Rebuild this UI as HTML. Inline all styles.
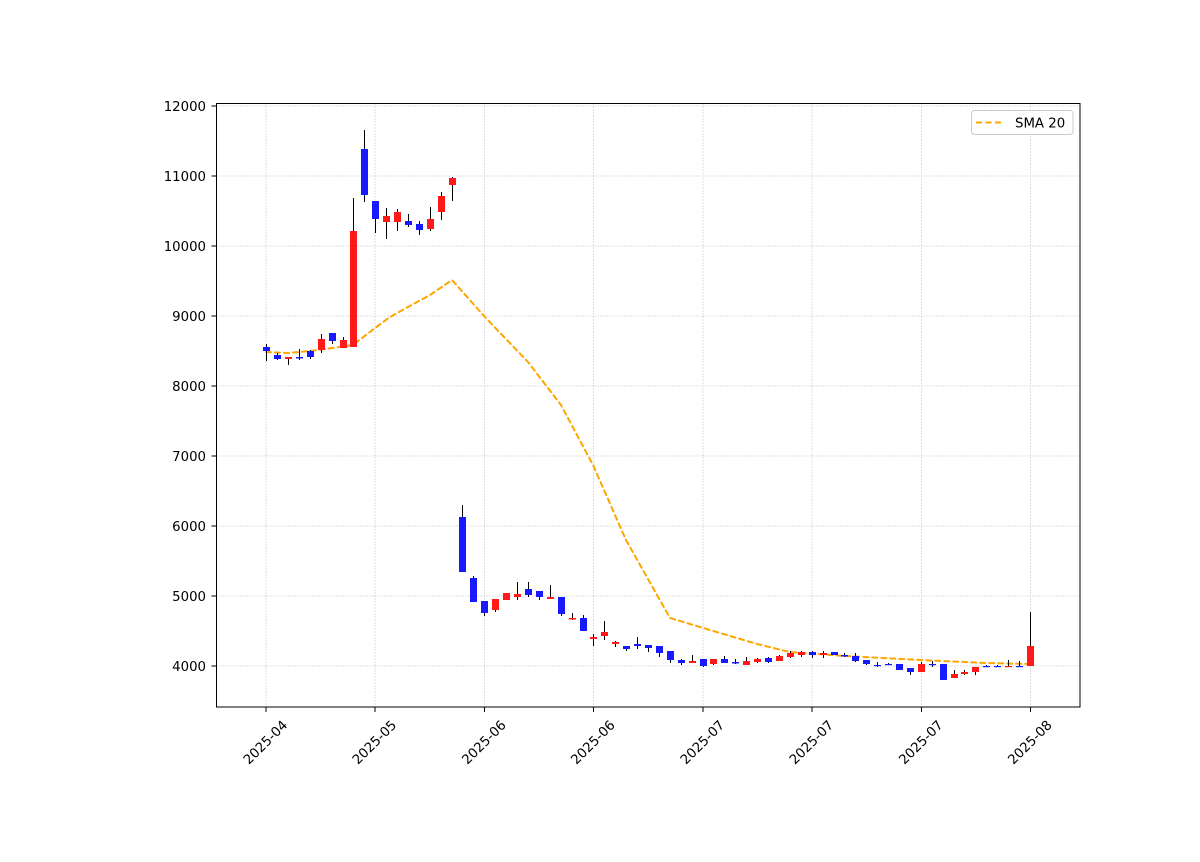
<!DOCTYPE html>
<html><head><meta charset="utf-8"><style>
html,body{margin:0;padding:0;background:#fff;}
svg{display:block;font-family:"DejaVu Sans","Liberation Sans",sans-serif;}
</style></head><body>
<svg width="1200" height="862" viewBox="0 0 1200 862" xmlns="http://www.w3.org/2000/svg">
<rect width="1200" height="862" fill="#fff"/>
<g stroke="#b0b0b0" stroke-width="0.8" stroke-dasharray="1,2">
<line x1="216.5" x2="1080" y1="106" y2="106"/><line x1="216.5" x2="1080" y1="176" y2="176"/><line x1="216.5" x2="1080" y1="246" y2="246"/><line x1="216.5" x2="1080" y1="316" y2="316"/><line x1="216.5" x2="1080" y1="386" y2="386"/><line x1="216.5" x2="1080" y1="456" y2="456"/><line x1="216.5" x2="1080" y1="526" y2="526"/><line x1="216.5" x2="1080" y1="596" y2="596"/><line x1="216.5" x2="1080" y1="666" y2="666"/>
<line y1="103.5" y2="707" x1="266" x2="266"/><line y1="103.5" y2="707" x1="375" x2="375"/><line y1="103.5" y2="707" x1="484.5" x2="484.5"/><line y1="103.5" y2="707" x1="593.5" x2="593.5"/><line y1="103.5" y2="707" x1="703" x2="703"/><line y1="103.5" y2="707" x1="812" x2="812"/><line y1="103.5" y2="707" x1="921.5" x2="921.5"/><line y1="103.5" y2="707" x1="1030.5" x2="1030.5"/>
</g>
<polyline fill="none" stroke="#ffa500" stroke-width="2" stroke-linecap="round" stroke-dasharray="5,4" points="266,352 288,353 310,351 332,348 353,345 375,328 390,317 408,307 430,295 452,280 484,316 528,362 561,405 593,465 626,540 670,618 720,633 757,644 790,652 845,656 921,660 986,663 1030,664"/>
<g transform="translate(0.5,0)">
<line x1="266" x2="266" y1="344" y2="361" stroke="#000"/><rect x="262.5" y="347" width="7" height="4" fill="#1919ff"/>
<line x1="277" x2="277" y1="353" y2="360" stroke="#000"/><rect x="273.5" y="355" width="7" height="4" fill="#1919ff"/>
<line x1="288" x2="288" y1="357" y2="365" stroke="#000"/><rect x="284.5" y="357" width="7" height="2" fill="#ff1919"/>
<line x1="299" x2="299" y1="349" y2="360" stroke="#000"/><rect x="295.5" y="357" width="7" height="1.5" fill="#1919ff"/>
<line x1="310" x2="310" y1="350" y2="359" stroke="#000"/><rect x="306.5" y="351" width="7" height="6" fill="#1919ff"/>
<line x1="321" x2="321" y1="334" y2="353" stroke="#000"/><rect x="317.5" y="339" width="7" height="11" fill="#ff1919"/>
<line x1="332" x2="332" y1="333" y2="344" stroke="#000"/><rect x="328.5" y="333" width="7" height="8" fill="#1919ff"/>
<line x1="343" x2="343" y1="337" y2="348" stroke="#000"/><rect x="339.5" y="340" width="7" height="8" fill="#ff1919"/>
<line x1="353" x2="353" y1="198" y2="347" stroke="#000"/><rect x="349.5" y="231" width="7" height="116" fill="#ff1919"/>
<line x1="364" x2="364" y1="130" y2="202" stroke="#000"/><rect x="360.5" y="149" width="7" height="46" fill="#1919ff"/>
<line x1="375" x2="375" y1="201" y2="233" stroke="#000"/><rect x="371.5" y="201" width="7" height="18" fill="#1919ff"/>
<line x1="386" x2="386" y1="208" y2="239" stroke="#000"/><rect x="382.5" y="216" width="7" height="6" fill="#ff1919"/>
<line x1="397" x2="397" y1="209" y2="231" stroke="#000"/><rect x="393.5" y="212" width="7" height="10" fill="#ff1919"/>
<line x1="408" x2="408" y1="214" y2="227" stroke="#000"/><rect x="404.5" y="221" width="7" height="4" fill="#1919ff"/>
<line x1="419" x2="419" y1="221" y2="235" stroke="#000"/><rect x="415.5" y="224" width="7" height="6" fill="#1919ff"/>
<line x1="430" x2="430" y1="207" y2="231" stroke="#000"/><rect x="426.5" y="219" width="7" height="10" fill="#ff1919"/>
<line x1="441" x2="441" y1="192" y2="220" stroke="#000"/><rect x="437.5" y="196" width="7" height="16" fill="#ff1919"/>
<line x1="452" x2="452" y1="177" y2="201" stroke="#000"/><rect x="448.5" y="178" width="7" height="7" fill="#ff1919"/>
<line x1="462" x2="462" y1="505" y2="572" stroke="#000"/><rect x="458.5" y="517" width="7" height="55" fill="#1919ff"/>
<line x1="473" x2="473" y1="576" y2="602" stroke="#000"/><rect x="469.5" y="578" width="7" height="24" fill="#1919ff"/>
<line x1="484" x2="484" y1="601" y2="616" stroke="#000"/><rect x="480.5" y="601" width="7" height="12" fill="#1919ff"/>
<line x1="495" x2="495" y1="599" y2="612" stroke="#000"/><rect x="491.5" y="599" width="7" height="11" fill="#ff1919"/>
<line x1="506" x2="506" y1="593" y2="600" stroke="#000"/><rect x="502.5" y="593" width="7" height="7" fill="#ff1919"/>
<line x1="517" x2="517" y1="582" y2="600" stroke="#000"/><rect x="513.5" y="594" width="7" height="3" fill="#ff1919"/>
<line x1="528" x2="528" y1="582" y2="597" stroke="#000"/><rect x="524.5" y="589" width="7" height="6" fill="#1919ff"/>
<line x1="539" x2="539" y1="591" y2="600" stroke="#000"/><rect x="535.5" y="591" width="7" height="6" fill="#1919ff"/>
<line x1="550" x2="550" y1="585" y2="599" stroke="#000"/><rect x="546.5" y="597" width="7" height="2" fill="#ff1919"/>
<line x1="561" x2="561" y1="597" y2="616" stroke="#000"/><rect x="557.5" y="597" width="7" height="17" fill="#1919ff"/>
<line x1="572" x2="572" y1="613" y2="620" stroke="#000"/><rect x="568.5" y="618" width="7" height="1.5" fill="#ff1919"/>
<line x1="583" x2="583" y1="615" y2="631" stroke="#000"/><rect x="579.5" y="618" width="7" height="13" fill="#1919ff"/>
<line x1="593" x2="593" y1="634" y2="646" stroke="#000"/><rect x="589.5" y="637" width="7" height="2" fill="#ff1919"/>
<line x1="604" x2="604" y1="621" y2="640" stroke="#000"/><rect x="600.5" y="632" width="7" height="4" fill="#ff1919"/>
<line x1="615" x2="615" y1="641" y2="647" stroke="#000"/><rect x="611.5" y="642" width="7" height="2" fill="#ff1919"/>
<line x1="626" x2="626" y1="646" y2="651" stroke="#000"/><rect x="622.5" y="646" width="7" height="3" fill="#1919ff"/>
<line x1="637" x2="637" y1="637" y2="649" stroke="#000"/><rect x="633.5" y="644" width="7" height="2" fill="#1919ff"/>
<line x1="648" x2="648" y1="645" y2="652" stroke="#000"/><rect x="644.5" y="645" width="7" height="3" fill="#1919ff"/>
<line x1="659" x2="659" y1="646" y2="657" stroke="#000"/><rect x="655.5" y="646" width="7" height="7" fill="#1919ff"/>
<line x1="670" x2="670" y1="651" y2="663" stroke="#000"/><rect x="666.5" y="651" width="7" height="9" fill="#1919ff"/>
<line x1="681" x2="681" y1="659" y2="665" stroke="#000"/><rect x="677.5" y="660" width="7" height="3" fill="#1919ff"/>
<line x1="692" x2="692" y1="655" y2="663" stroke="#000"/><rect x="688.5" y="661" width="7" height="2" fill="#ff1919"/>
<line x1="703" x2="703" y1="659" y2="667" stroke="#000"/><rect x="699.5" y="659" width="7" height="7" fill="#1919ff"/>
<line x1="713" x2="713" y1="659" y2="665" stroke="#000"/><rect x="709.5" y="659" width="7" height="5" fill="#ff1919"/>
<line x1="724" x2="724" y1="656" y2="663" stroke="#000"/><rect x="720.5" y="659" width="7" height="4" fill="#1919ff"/>
<line x1="735" x2="735" y1="659" y2="664" stroke="#000"/><rect x="731.5" y="662" width="7" height="1.5" fill="#1919ff"/>
<line x1="746" x2="746" y1="657" y2="665" stroke="#000"/><rect x="742.5" y="661" width="7" height="4" fill="#ff1919"/>
<line x1="757" x2="757" y1="658" y2="663" stroke="#000"/><rect x="753.5" y="659" width="7" height="3" fill="#ff1919"/>
<line x1="768" x2="768" y1="657" y2="663" stroke="#000"/><rect x="764.5" y="658" width="7" height="4" fill="#1919ff"/>
<line x1="779" x2="779" y1="655" y2="661" stroke="#000"/><rect x="775.5" y="656" width="7" height="5" fill="#ff1919"/>
<line x1="790" x2="790" y1="651" y2="658" stroke="#000"/><rect x="786.5" y="653" width="7" height="4" fill="#ff1919"/>
<line x1="801" x2="801" y1="651" y2="657" stroke="#000"/><rect x="797.5" y="652" width="7" height="3" fill="#ff1919"/>
<line x1="812" x2="812" y1="651" y2="658" stroke="#000"/><rect x="808.5" y="652" width="7" height="3" fill="#1919ff"/>
<line x1="823" x2="823" y1="651" y2="658" stroke="#000"/><rect x="819.5" y="653" width="7" height="2" fill="#ff1919"/>
<line x1="834" x2="834" y1="652" y2="655" stroke="#000"/><rect x="830.5" y="652" width="7" height="3" fill="#1919ff"/>
<line x1="844" x2="844" y1="653" y2="657" stroke="#000"/><rect x="840.5" y="655" width="7" height="1.5" fill="#1919ff"/>
<line x1="855" x2="855" y1="653" y2="662" stroke="#000"/><rect x="851.5" y="656" width="7" height="5" fill="#1919ff"/>
<line x1="866" x2="866" y1="660" y2="665" stroke="#000"/><rect x="862.5" y="660" width="7" height="4" fill="#1919ff"/>
<line x1="877" x2="877" y1="662" y2="667" stroke="#000"/><rect x="873.5" y="665" width="7" height="1.2" fill="#1919ff"/>
<line x1="888" x2="888" y1="663" y2="665" stroke="#000"/><rect x="884.5" y="664" width="7" height="1.2" fill="#1919ff"/>
<line x1="899" x2="899" y1="664" y2="670" stroke="#000"/><rect x="895.5" y="664" width="7" height="6" fill="#1919ff"/>
<line x1="910" x2="910" y1="668" y2="675" stroke="#000"/><rect x="906.5" y="668" width="7" height="4" fill="#1919ff"/>
<line x1="921" x2="921" y1="662" y2="672" stroke="#000"/><rect x="917.5" y="664" width="7" height="8" fill="#ff1919"/>
<line x1="932" x2="932" y1="661" y2="667" stroke="#000"/><rect x="928.5" y="664" width="7" height="1.2" fill="#1919ff"/>
<line x1="943" x2="943" y1="664" y2="680" stroke="#000"/><rect x="939.5" y="664" width="7" height="16" fill="#1919ff"/>
<line x1="954" x2="954" y1="670" y2="678" stroke="#000"/><rect x="950.5" y="674" width="7" height="4" fill="#ff1919"/>
<line x1="964" x2="964" y1="670" y2="675" stroke="#000"/><rect x="960.5" y="672" width="7" height="2" fill="#ff1919"/>
<line x1="975" x2="975" y1="667" y2="675" stroke="#000"/><rect x="971.5" y="667" width="7" height="5" fill="#ff1919"/>
<line x1="986" x2="986" y1="665" y2="667" stroke="#000"/><rect x="982.5" y="666" width="7" height="1.2" fill="#1919ff"/>
<line x1="997" x2="997" y1="665" y2="667" stroke="#000"/><rect x="993.5" y="666" width="7" height="1.2" fill="#1919ff"/>
<line x1="1008" x2="1008" y1="660" y2="667" stroke="#000"/><rect x="1004.5" y="666" width="7" height="1.2" fill="#ff1919"/>
<line x1="1019" x2="1019" y1="661" y2="667" stroke="#000"/><rect x="1015.5" y="666" width="7" height="1.2" fill="#1919ff"/>
<line x1="1030" x2="1030" y1="612" y2="666" stroke="#000"/><rect x="1026.5" y="646" width="7" height="20" fill="#ff1919"/>
</g>
<rect x="216.5" y="103.5" width="863.5" height="603.5" fill="none" stroke="#000" stroke-width="1"/>
<g stroke="#000" stroke-width="1">
<line x1="211.5" x2="216.5" y1="106" y2="106"/><line x1="211.5" x2="216.5" y1="176" y2="176"/><line x1="211.5" x2="216.5" y1="246" y2="246"/><line x1="211.5" x2="216.5" y1="316" y2="316"/><line x1="211.5" x2="216.5" y1="386" y2="386"/><line x1="211.5" x2="216.5" y1="456" y2="456"/><line x1="211.5" x2="216.5" y1="526" y2="526"/><line x1="211.5" x2="216.5" y1="596" y2="596"/><line x1="211.5" x2="216.5" y1="666" y2="666"/>
<line y1="707" y2="712" x1="266" x2="266"/><line y1="707" y2="712" x1="375" x2="375"/><line y1="707" y2="712" x1="484.5" x2="484.5"/><line y1="707" y2="712" x1="593.5" x2="593.5"/><line y1="707" y2="712" x1="703" x2="703"/><line y1="707" y2="712" x1="812" x2="812"/><line y1="707" y2="712" x1="921.5" x2="921.5"/><line y1="707" y2="712" x1="1030.5" x2="1030.5"/>
</g>
<g font-size="13.3" text-anchor="end" fill="#000">
<text x="206" y="111">12000</text><text x="206" y="181">11000</text><text x="206" y="251">10000</text><text x="206" y="321">9000</text><text x="206" y="391">8000</text><text x="206" y="461">7000</text><text x="206" y="531">6000</text><text x="206" y="601">5000</text><text x="206" y="671">4000</text>
</g>
<g font-size="13.3" text-anchor="middle" fill="#000">
<text transform="translate(265,742) rotate(-45)" y="5">2025-04</text>
<text transform="translate(374,742) rotate(-45)" y="5">2025-05</text>
<text transform="translate(483.5,742) rotate(-45)" y="5">2025-06</text>
<text transform="translate(592.5,742) rotate(-45)" y="5">2025-06</text>
<text transform="translate(702,742) rotate(-45)" y="5">2025-07</text>
<text transform="translate(811,742) rotate(-45)" y="5">2025-07</text>
<text transform="translate(920.5,742) rotate(-45)" y="5">2025-07</text>
<text transform="translate(1029.5,742) rotate(-45)" y="5">2025-08</text>
</g>
<rect x="971.5" y="110.5" width="101.5" height="24" rx="3" fill="#fff" fill-opacity="0.8" stroke="#cccccc"/>
<line x1="976" x2="1004" y1="122.5" y2="122.5" stroke="#ffa500" stroke-width="2" stroke-dasharray="6,3.5"/>
<text x="1015" y="127.5" font-size="13.3" fill="#000">SMA 20</text>
</svg>
</body></html>
